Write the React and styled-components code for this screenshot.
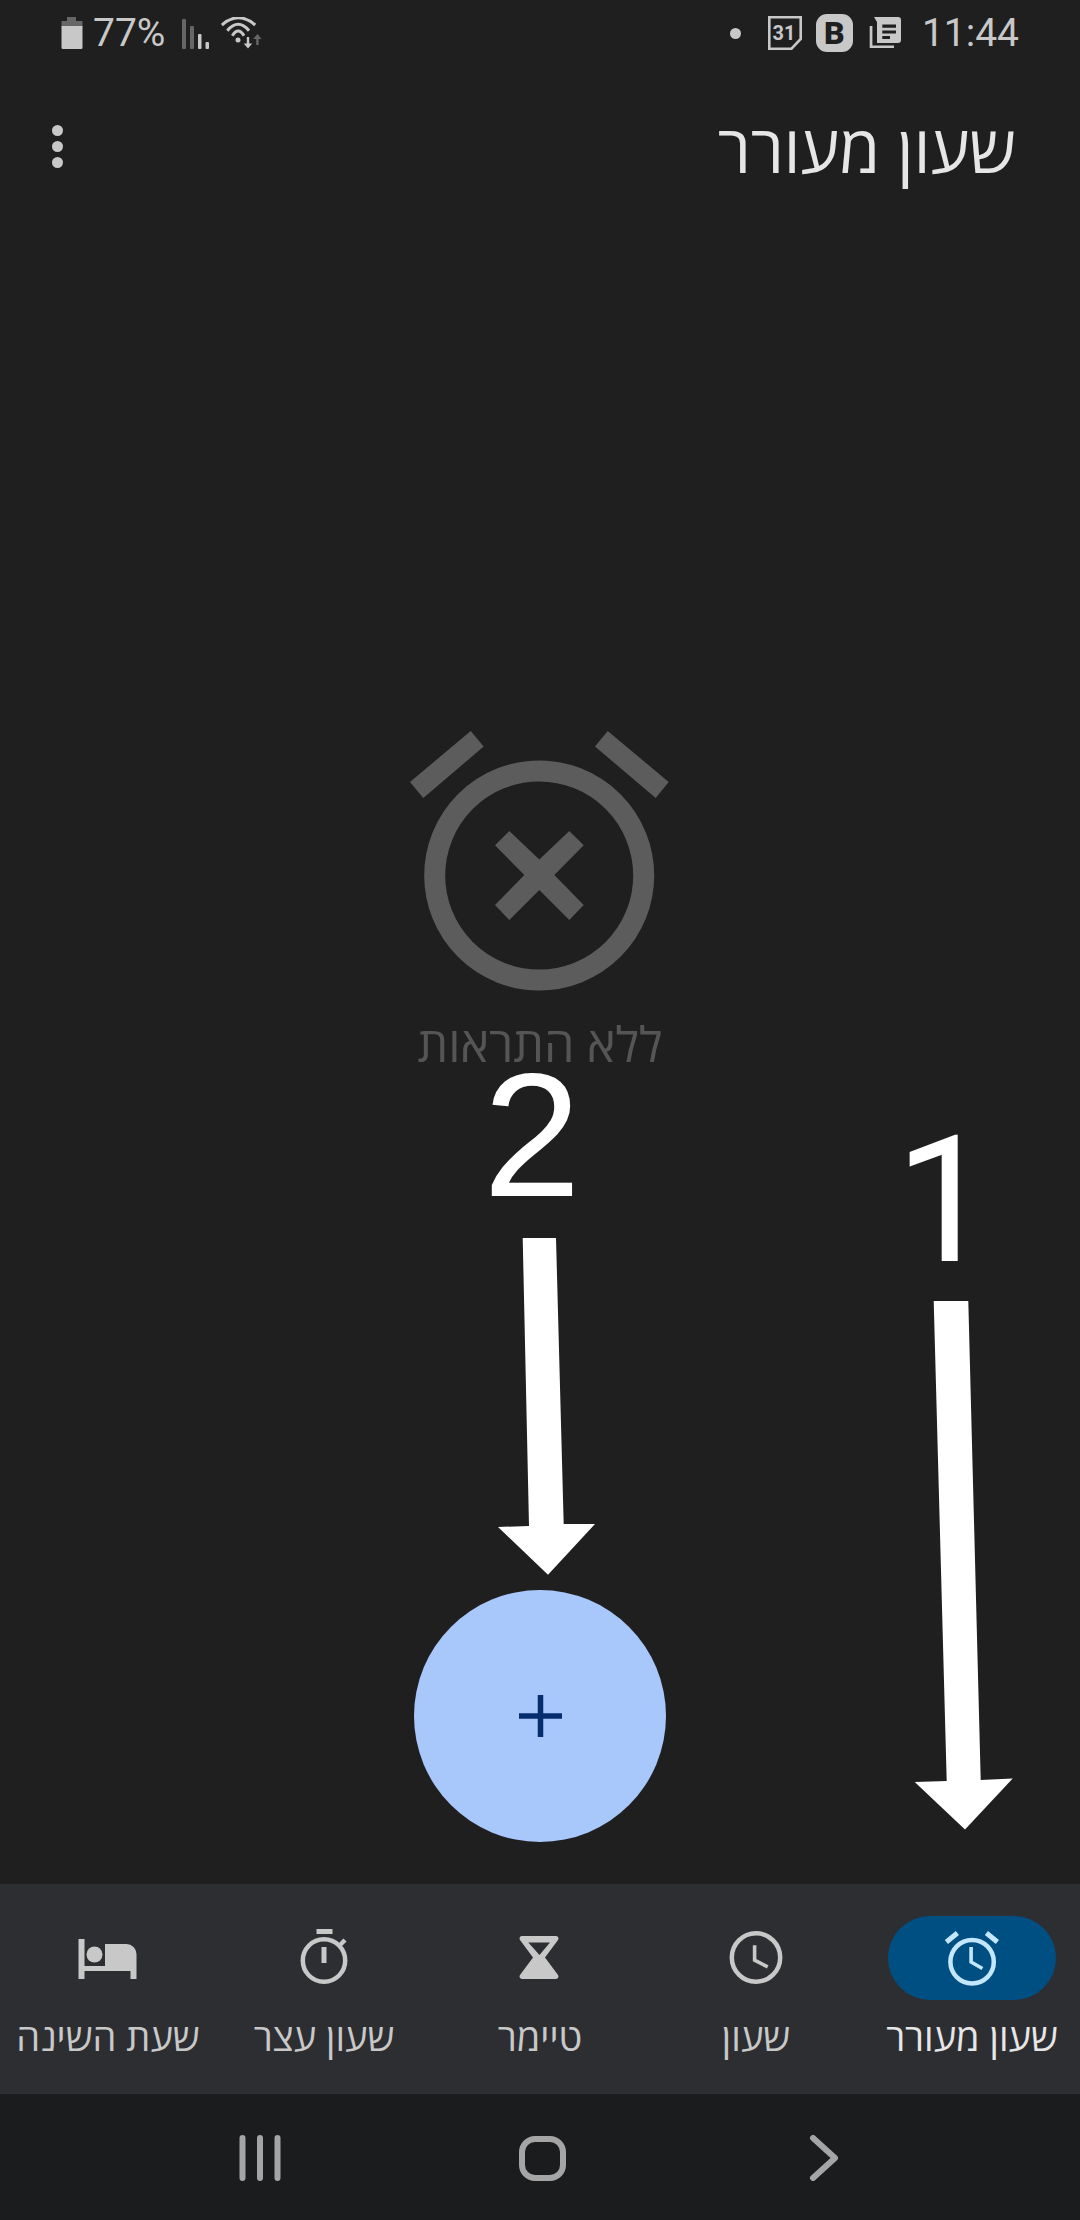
import React from 'react';
import styled, { createGlobalStyle } from 'styled-components';

const GlobalStyle = createGlobalStyle`
  html, body {
    margin: 0;
    padding: 0;
    background: #1f1f1f;
  }
  * {
    box-sizing: border-box;
  }
`;

const tabs = [
  { id: 'alarm', label: 'שעון מעורר', Icon: AlarmIcon, active: true },
  { id: 'clock', label: 'שעון', Icon: ClockIcon },
  { id: 'timer', label: 'טיימר', Icon: TimerIcon },
  { id: 'stopwatch', label: 'שעון עצר', Icon: StopwatchIcon },
  { id: 'bedtime', label: 'שעת השינה', Icon: BedIcon },
];

function AlarmIcon() {
  return (
    <TabSvg viewBox="0 0 72 72" fill="none" stroke="currentColor" strokeWidth="4.5">
      <circle cx="36.1" cy="39.7" r="21.7" />
      <path d="M10.4 20l11-9M50.4 11l11 9" strokeWidth="5" />
      <path d="M35.1 25v15l11.3 6.5" strokeWidth="3.6" />
    </TabSvg>
  );
}

function ClockIcon() {
  return (
    <TabSvg viewBox="0 0 72 72" fill="none" stroke="currentColor" strokeWidth="4.5">
      <circle cx="36" cy="35.5" r="24.2" />
      <path d="M34.6 23.2v15l13.1 6.6" strokeWidth="3.6" />
    </TabSvg>
  );
}

function TimerIcon() {
  return (
    <TabSvg viewBox="0 0 72 72" fill="currentColor">
      <path
        fillRule="evenodd"
        d="M18 14h34a2.5 2.5 0 0 1 2 4L41 35.5 54 53a2.5 2.5 0 0 1-2 4H18a2.5 2.5 0 0 1-2-4l13-17.5L16 18a2.5 2.5 0 0 1 2-4zM24.3 20.5 35.5 33 46 20.5z"
      />
    </TabSvg>
  );
}

function StopwatchIcon() {
  return (
    <TabSvg viewBox="0 0 72 72" fill="none" stroke="currentColor" strokeWidth="4.5">
      <circle cx="36" cy="38.5" r="21.2" />
      <path d="M28.5 9.5h16" strokeWidth="5" />
      <path d="M52 23l5-5" />
      <path d="M36 25v16" strokeWidth="5" />
    </TabSvg>
  );
}

function BedIcon() {
  return (
    <TabSvg viewBox="0 0 72 72" fill="currentColor">
      <path d="M6.5 17h6v27h20.5V22H54.5a10 10 0 0 1 10 10v25h-6v-8h-46v8h-6z" />
      <circle cx="22.5" cy="32.5" r="8" />
    </TabSvg>
  );
}

const Arrow = ({ left, top, width, height, points }) => (
  <ArrowSvg $left={left} $top={top} width={width} height={height} viewBox={`0 0 ${width} ${height}`}>
    <polygon points={points} fill="#fff" />
  </ArrowSvg>
);

const App = () => (
  <Page>
    <GlobalStyle />
    <StatusBar>
      <StatusGroup>
        <svg width="22" height="32" viewBox="0 0 22 32">
          <path d="M6 0h9v4h6.5v6H.5V4H6z" fill="#666" />
          <path d="M.5 9h21v21.5a1.5 1.5 0 0 1-1.5 1.5H2a1.5 1.5 0 0 1-1.5-1.5z" fill="#c8c8c8" />
        </svg>
        <StatusText $left={10}>77%</StatusText>
        <SignalSvg width="28" height="31" viewBox="0 0 28 31">
          <rect x="1" y="1" width="4" height="30" rx="1" fill="#666" />
          <rect x="9" y="8" width="4" height="23" rx="1" fill="#666" />
          <rect x="17" y="16" width="3.5" height="15" rx="1" fill="#c8c8c8" />
          <rect x="24.5" y="24" width="3.5" height="7" rx="1" fill="#c8c8c8" />
        </SignalSvg>
        <WifiSvg width="41" height="32" viewBox="0 0 41 32" fill="none">
          <g stroke="#c8c8c8" strokeWidth="3">
            <path d="M.8 8Q17.5-6.5 34.2 8" />
            <path d="M6.3 13.7Q17.2 1 28 13.7" />
            <path d="M11.3 18.7Q17.2 9.5 23 18.7" />
          </g>
          <circle cx="17" cy="23" r="2.5" fill="#c8c8c8" />
          <path d="M25.8 20h2.4v6.5h3L27 31.5l-4.3-5h3.1z" fill="#c8c8c8" />
          <path d="M35.2 28h2.4v-6h3L36.4 17l-4.3 5h3.1z" fill="#666" />
        </WifiSvg>
      </StatusGroup>
      <StatusGroup>
        <NotifyDot />
        <CalendarSvg width="34" height="34" viewBox="0 0 34 34">
          <path d="M1.3 1.3H32.7V23L23.5 32.7H1.3z" fill="none" stroke="#c8c8c8" strokeWidth="2.6" />
          <text x="16" y="24" textAnchor="middle" fontFamily="Roboto, sans-serif" fontWeight="700" fontSize="20" fill="#c8c8c8">31</text>
        </CalendarSvg>
        <BadgeB>B</BadgeB>
        <NewsSvg width="32" height="32" viewBox="0 0 32 32">
          <path d="M5 0H29a3 3 0 0 1 3 3V23a3 3 0 0 1-3 3H8V5z" fill="#c8c8c8" />
          <path d="M13.3 7.4H27V10.7H13.3zM13.3 13.4H27V16.4H13.3zM13.3 19H21V22H13.3z" fill="#1f1f1f" />
          <path d="M.7 9H3.4V28.5H25V31H.7z" fill="#c8c8c8" />
        </NewsSvg>
        <StatusText $left={21}>11:44</StatusText>
      </StatusGroup>
    </StatusBar>

    <AppBar>
      <MoreButton>
        <span />
        <span />
        <span />
      </MoreButton>
      <Title>שעון מעורר</Title>
    </AppBar>

    <Main>
      <EmptyState>
        <svg width="260" height="268" viewBox="410 730 260 268">
          <circle cx="539.2" cy="875.5" r="104.5" fill="none" stroke="#5c5c5c" strokeWidth="21" />
          <polygon points="470.7,731 483.7,746.5 423.3,798 410,782" fill="#5c5c5c" />
          <polygon points="607.7,731 668.7,782 655.7,798 595,746.5" fill="#5c5c5c" />
          <polygon
            points="509.3,831 539.3,859.4 569.3,831 583.7,845.3 554.3,875 583.7,905 569.3,920 539.3,890 509.3,920 495,905 524.3,875 495,845.3"
            fill="#5c5c5c"
          />
        </svg>
        <EmptyText>ללא התראות</EmptyText>
      </EmptyState>
      <Fab>
        <svg width="44" height="44" viewBox="0 0 44 44">
          <path d="M22.5 1v42M1 22h43" stroke="#062e6f" strokeWidth="5.5" />
        </svg>
      </Fab>
    </Main>

    <BottomNav>
      {tabs.map(({ id, label, Icon, active }) => (
        <Tab key={id}>
          <TabPill $active={active}>
            <Icon />
          </TabPill>
          <TabLabel $active={active}>{label}</TabLabel>
        </Tab>
      ))}
    </BottomNav>

    <SystemNav>
      <SystemSlot>
        <svg width="44" height="46" viewBox="0 0 44 46">
          <path d="M4.5 3v40M22 3v40M39.5 3v40" stroke="#a5a5a5" strokeWidth="6" strokeLinecap="round" />
        </svg>
      </SystemSlot>
      <SystemSlot>
        <HomeKey />
      </SystemSlot>
      <SystemSlot>
        <svg width="30" height="46" viewBox="0 0 30 46">
          <path d="M4 3l22 20L4 43" fill="none" stroke="#a5a5a5" strokeWidth="6" strokeLinecap="round" strokeLinejoin="round" />
        </svg>
      </SystemSlot>
    </SystemNav>

    <Mark $left={483} $top={1070} $font="'Liberation Sans', Arial, sans-serif">2</Mark>
    <Arrow left={498} top={1238} width={98} height={337} points="24.7,0 58,0 65.7,286 97,286 50,336.7 0,289 31,288" />
    <Mark $left={895} $top={1136} $font="Roboto, sans-serif">1</Mark>
    <Arrow left={914} top={1301} width={99} height={529} points="19.7,0 54.3,0 66.7,479 98.7,477.6 51,528.5 .7,481 32.7,480" />
  </Page>
);

export default App;

const Page = styled.div`
  position: relative;
  width: 1080px;
  height: 2220px;
  overflow: hidden;
  display: flex;
  flex-direction: column;
  background: #1f1f1f;
  font-family: 'Open Sans', 'Liberation Sans', sans-serif;
`;

const StatusBar = styled.div`
  height: 66px;
  padding: 0 61px;
  display: flex;
  justify-content: space-between;
  align-items: center;
  direction: ltr;
`;

const StatusGroup = styled.div`
  display: flex;
  align-items: center;
`;

const StatusText = styled.span`
  margin-left: ${({ $left }) => $left}px;
  font-family: Roboto, sans-serif;
  font-size: 39px;
  line-height: 44px;
  color: #c8c8c8;
`;

const SignalSvg = styled.svg`
  margin-left: 16px;
`;

const WifiSvg = styled.svg`
  margin-left: 12px;
`;

const CalendarSvg = styled.svg`
  margin-left: 27px;
`;

const NewsSvg = styled.svg`
  margin-left: 16px;
`;

const NotifyDot = styled.span`
  width: 11px;
  height: 11px;
  border-radius: 50%;
  background: #c8c8c8;
`;

const BadgeB = styled.span`
  width: 37px;
  height: 38px;
  margin-left: 14px;
  display: flex;
  align-items: center;
  justify-content: center;
  border-radius: 11px;
  background: #c8c8c8;
  color: #1f1f1f;
  font-family: Roboto, sans-serif;
  font-size: 32px;
  font-weight: 900;
`;

const AppBar = styled.header`
  height: 134px;
  padding: 27px 64px 0 52px;
  display: flex;
  justify-content: space-between;
  align-items: center;
`;

const MoreButton = styled.div`
  display: flex;
  flex-direction: column;
  gap: 5px;
  span {
    width: 11px;
    height: 11px;
    border-radius: 50%;
    background: #c8c8c8;
  }
`;

const Title = styled.h1`
  margin: 0;
  font-size: 66px;
  font-weight: 400;
  line-height: 76px;
  color: #e6e6e6;
  direction: rtl;
`;

const Main = styled.main`
  flex: 1;
  min-height: 0;
  display: flex;
  flex-direction: column;
  align-items: center;
`;

const EmptyState = styled.div`
  margin-top: 530px;
  display: flex;
  flex-direction: column;
  align-items: center;
`;

const EmptyText = styled.div`
  margin-top: 22px;
  font-size: 48.5px;
  line-height: 46px;
  color: #555;
  direction: rtl;
`;

const Fab = styled.button`
  width: 252px;
  height: 252px;
  margin-top: auto;
  margin-bottom: 42px;
  padding: 0;
  border: 0;
  border-radius: 50%;
  display: flex;
  align-items: center;
  justify-content: center;
  background: #a8c7fa;
`;

const BottomNav = styled.nav`
  height: 210px;
  padding-top: 32px;
  display: grid;
  grid-template-columns: repeat(5, 1fr);
  direction: rtl;
  background: #2d2e32;
`;

const Tab = styled.div`
  display: flex;
  flex-direction: column;
  align-items: center;
`;

const TabPill = styled.div`
  width: 168px;
  height: 84px;
  border-radius: 42px;
  display: flex;
  align-items: center;
  justify-content: center;
  background: ${({ $active }) => ($active ? '#004f82' : 'transparent')};
  color: ${({ $active }) => ($active ? '#c2e7ff' : '#c8c8c8')};
`;

const TabSvg = styled.svg`
  width: 72px;
  height: 72px;
`;

const TabLabel = styled.span`
  margin-top: 14px;
  font-size: 38px;
  line-height: 44px;
  white-space: nowrap;
  color: ${({ $active }) => ($active ? '#e6e6e6' : '#c8c8c8')};
`;

const SystemNav = styled.div`
  height: 126px;
  padding: 2px 115px 0 119px;
  display: grid;
  grid-template-columns: repeat(3, 1fr);
  background: #1b1c1e;
`;

const SystemSlot = styled.div`
  display: flex;
  align-items: center;
  justify-content: center;
`;

const HomeKey = styled.span`
  width: 47px;
  height: 45px;
  border: 6px solid #a5a5a5;
  border-radius: 16px;
`;

const Mark = styled.span`
  position: absolute;
  left: ${({ $left }) => $left}px;
  top: ${({ $top }) => $top}px;
  font-family: ${({ $font }) => $font};
  font-size: 176px;
  line-height: 130px;
  color: #fff;
`;

const ArrowSvg = styled.svg`
  position: absolute;
  left: ${({ $left }) => $left}px;
  top: ${({ $top }) => $top}px;
`;
